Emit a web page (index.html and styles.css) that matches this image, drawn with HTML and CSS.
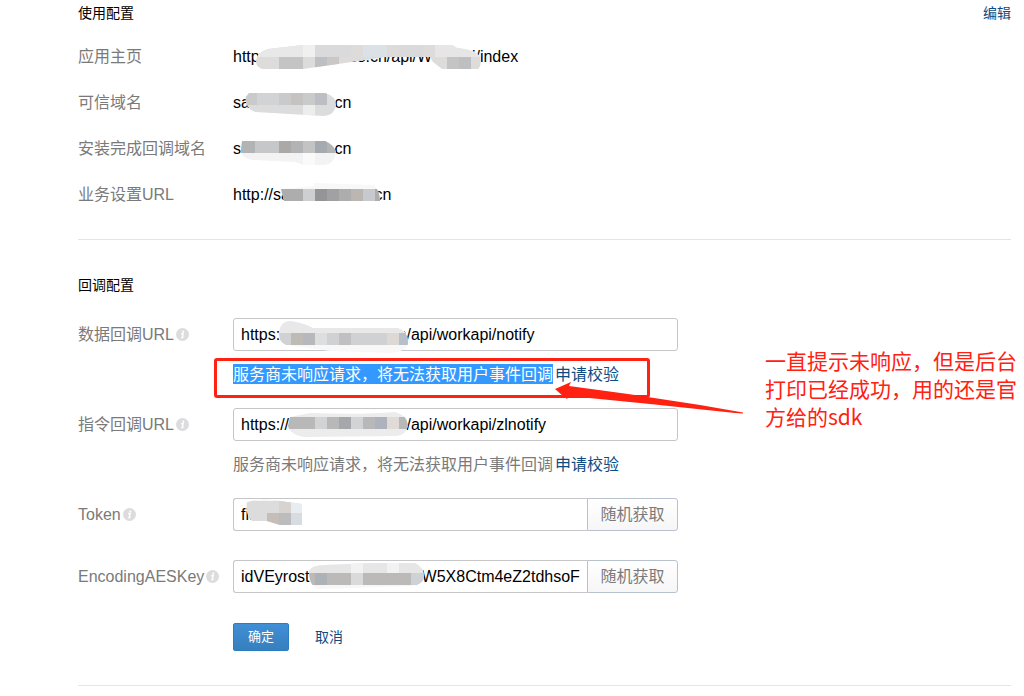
FILE: index.html
```html
<!DOCTYPE html>
<html lang="zh-CN">
<head>
<meta charset="utf-8">
<title>应用配置</title>
<link rel="stylesheet" href="styles.css">
</head>
<body>
<svg class="defs" aria-hidden="true">
  <symbol id="info" viewBox="0 0 13 13"><circle cx="6.5" cy="6.5" r="6.5" fill="#dcdcde"/><circle cx="7.3" cy="3.4" r="1" fill="#fff"/><path d="M5.2 5.8 7.2 5.4 6.1 9.7 7.6 9.2" fill="none" stroke="#fff" stroke-width="1.4"/></symbol>
</svg>
<main class="page">
  <section class="section usage">
    <header class="section-head"><h2>使用配置</h2><a href="#">编辑</a></header>
    <dl class="summary">
      <div class="row"><dt>应用主页</dt><dd>http://saxxxxxxxiss.cn/api/Workapi/index
        <svg class="mask mask-home" viewBox="255 45 228 24" aria-hidden="true"><clipPath id="c1"><path d="M256 61Q257 52 268 49L303 45H452L457 48Q472 49 480 56Q482 66 478 69H442L433 62L430 57H386L345 63L303 69H262Q256 67 256 61Z"/></clipPath><g clip-path="url(#c1)"><path fill="#dddcdb" d="M255 45h228v24H255z"/><path fill="#e8e8e8" d="M255 45h48v12h-48z"/><path fill="#f0f0f0" d="M303 45h12v12h-12z"/><path fill="#dadadc" d="M315 45h36v12h-36zM399 45h24v12h-24z"/><path fill="#dce1e5" d="M363 45h24v12h-24z"/><path fill="#c4c4c4" d="M279 57h24v12h-24zM447 57h12v12h-12z"/><path fill="#bebfc2" d="M315 57h12v12h-12zM459 57h12v12h-12z"/><path fill="#c9c8c7" d="M327 57h12v12h-12z"/><path fill="#e6e6e6" d="M435 45h48v12h-48z"/></g></svg></dd></div>
      <div class="row"><dt>可信域名</dt><dd>saaaaaaaaaa.cn
        <svg class="mask mask-domain" viewBox="245 93 92 24" aria-hidden="true"><clipPath id="c2"><path d="M249 93H325Q336 96 336 105Q335 115 324 116L255 112Q244 107 246 97Z"/></clipPath><g clip-path="url(#c2)"><path fill="#dcdcdc" d="M245 93h92v24h-92z"/><path fill="#cacacb" d="M245 93h12v12h-12zM279 93h12v12h-12zM303 93h12v12h-12z"/><path fill="#d2d3d5" d="M257 93h22v12h-22z"/><path fill="#c4c3c1" d="M291 93h12v12h-12z"/><path fill="#bdbec3" d="M315 93h12v12h-12z"/><path fill="#eceeed" d="M303 105h12v12h-12z"/></g></svg></dd></div>
      <div class="row"><dt>安装完成回调域名</dt><dd>saaaaaaaaaa.cn
        <svg class="mask mask-callback" viewBox="240 141 97 24" aria-hidden="true"><clipPath id="c3"><path d="M242 141H325Q335 145 336 153Q334 164 325 165H304L295 162L253 160Q240 158 241 149Z"/></clipPath><g clip-path="url(#c3)"><path fill="#f3f3f3" d="M240 141h97v24h-97z"/><path fill="#b2b3b5" d="M240 141h97v12h-97z"/><path fill="#c5c7c9" d="M255 141h24v12h-24z"/><path fill="#aaa9a8" d="M279 141h12v12h-12z"/><path fill="#c3c3c4" d="M303 141h12v12h-12z"/><path fill="#a5a9b0" d="M315 141h12v12h-12z"/><path fill="#fafafa" d="M303 153h12v12h-12z"/></g></svg></dd></div>
      <div class="row"><dt>业务设置URL</dt><dd>http://saaaaaaaaaa.cn
        <svg class="mask mask-business" viewBox="280 183 100 24" aria-hidden="true"><clipPath id="c4"><path d="M281 189L314 186V183L374 185Q380 191 380 201H284Z"/></clipPath><g clip-path="url(#c4)"><path fill="#f8f8f8" d="M280 183h100v24H280z"/><path fill="#adadae" d="M280 189h100v12H280z"/><path fill="#cecfd1" d="M303 189h12v12h-12z"/><path fill="#959496" d="M315 189h12v12h-12z"/><path fill="#a1a0a2" d="M327 189h12v12h-12z"/><path fill="#bbb6b1" d="M351 189h12v12h-12z"/><path fill="#c6cace" d="M363 189h12v12h-12z"/></g></svg></dd></div>
    </dl>
  </section>

  <form class="section callback">
    <h2>回调配置</h2>
    <div class="field">
      <label for="data-url">数据回调URL <svg class="info"><use href="#info"/></svg></label>
      <div class="control">
        <div class="group"><input id="data-url" type="text" value="https://ssaaaaaaaaa.cn/api/workapi/notify">
          <svg class="mask mask-data" viewBox="278 320 130 33" aria-hidden="true"><clipPath id="c5"><path d="M279 333Q280 321 291 321Q304 323 313 328H397Q408 330 408 344Q405 352 391 353L330 351L286 345Q279 342 279 333Z"/></clipPath><g clip-path="url(#c5)"><path fill="#f8f8f8" d="M278 320h130v33H278z"/><path fill="#e8e8e8" d="M278 320h130v13H278z"/><path fill="#d0d1d2" d="M278 333h130v12H278z"/><path fill="#bebbb6" d="M291 333h12v12h-12z"/><path fill="#b7b8bd" d="M303 333h12v12h-12z"/><path fill="#dedede" d="M315 333h12v12h-12z"/><path fill="#c0c0c2" d="M339 333h12v12h-12z"/><path fill="#ddd8d3" d="M387 333h12v12h-12z"/><path fill="#b8c0c7" d="M399 333h12v12h-12z"/></g></svg></div>
        <p class="hint"><mark>服务商未响应请求，将无法获取用户事件回调</mark><a href="#">申请校验</a>
          <span class="callout-box"></span>
          <svg class="callout-arrow" viewBox="555 380 190 36" aria-hidden="true"><path fill="#ff2112" d="M555 389 571 382 569 386 628 394 700 405 743 412.500V413.500L735 413 650 404 569 396 567 399 563 396Z"/></svg>
          <span class="callout-note">一直提示未响应，但是后台<br>打印已经成功，用的还是官<br>方给的sdk</span>
        </p>
      </div>
    </div>
    <div class="field">
      <label for="command-url">指令回调URL <svg class="info"><use href="#info"/></svg></label>
      <div class="control">
        <div class="group"><input id="command-url" type="text" value="https://ssaaaaaaaaa.cn/api/workapi/zlnotify">
          <svg class="mask mask-command" viewBox="288 412 120 25" aria-hidden="true"><clipPath id="c6"><path d="M290 417L310 413Q360 415 395 412Q407 415 408 425Q406 436 396 436L305 437Q290 435 288 426Z"/></clipPath><g clip-path="url(#c6)"><path fill="#ececec" d="M288 412h120v25H288z"/><path fill="#b9b8b8" d="M288 417h120v12H288z"/><path fill="#d2d3d5" d="M315 417h12v12h-12zM351 417h12v12h-12z"/><path fill="#a5a7aa" d="M339 417h12v12h-12z"/><path fill="#adb2bd" d="M375 417h12v12h-12z"/><path fill="#e0dbd7" d="M387 417h12v12h-12z"/></g></svg></div>
        <p class="hint"><span>服务商未响应请求，将无法获取用户事件回调</span><a href="#">申请校验</a></p>
      </div>
    </div>
    <div class="field field-short">
      <label for="token">Token <svg class="info"><use href="#info"/></svg></label>
      <div class="control"><div class="group"><input id="token" type="text" value="fiaaaaa"><button type="button">随机获取</button>
        <svg class="mask mask-token" viewBox="245 498 58 28" aria-hidden="true"><clipPath id="c7"><path d="M247 502Q260 498 280 501L302 504V525H280L267 521H252Q245 515 247 502Z"/></clipPath><g clip-path="url(#c7)"><path fill="#dcdcdc" d="M245 498h58v28h-58z"/><path fill="#f6f6f6" d="M245 498h58v3h-58z"/><path fill="#d6d3d1" d="M279 501h12v12h-12z"/><path fill="#e9edf1" d="M291 501h12v12h-12z"/><path fill="#c4bdb8" d="M267 513h12v12h-12z"/><path fill="#bcbcbf" d="M279 513h12v12h-12z"/><path fill="#d7dce0" d="M291 513h12v12h-12z"/></g></svg></div></div>
    </div>
    <div class="field field-short">
      <label for="aes-key">EncodingAESKey <svg class="info"><use href="#info"/></svg></label>
      <div class="control"><div class="group"><input id="aes-key" type="text" value="idVEyrostwaaaaaaaaaw7W5X8Ctm4eZ2tdhsoF"><button type="button">随机获取</button>
        <svg class="mask mask-key" viewBox="308 562 117 28" aria-hidden="true"><clipPath id="c8"><path d="M309 571Q311 565 325 565L370 563H415Q424 567 424 577Q422 585 412 586L318 589Q309 586 309 571Z"/></clipPath><g clip-path="url(#c8)"><path fill="#f7f7f7" d="M308 562h117v28H308z"/><path fill="#e7e6e6" d="M308 562h117v11H308z"/><path fill="#f2f2f2" d="M351 562h12v11h-12zM387 562h12v11h-12z"/><path fill="#bcbab9" d="M308 573h117v12H308z"/><path fill="#adb2b7" d="M315 573h12v12h-12z"/><path fill="#dadada" d="M351 573h12v12h-12z"/><path fill="#ced1d6" d="M411 573h14v12h-14z"/></g></svg></div></div>
    </div>
    <div class="actions"><button class="primary" type="submit">确定</button><a href="#">取消</a></div>
  </form>
</main>
</body>
</html>
```
FILE: styles.css
```css
* { box-sizing: border-box; }
body {
  margin: 0;
  background: #fff;
  color: #000;
  font: 16px/24px "Liberation Sans", "Noto Sans CJK SC", sans-serif;
}
h2, p, dl, dd { margin: 0; }
h2 { font-size: 14px; line-height: 24px; font-weight: 400; }
a { color: #0f4c81; text-decoration: none; }
.defs { position: absolute; width: 0; height: 0; }
.page { padding: 1px 13px 0 78px; }
.section { border-bottom: 1px solid #e4e4e4; }
.usage { padding-bottom: 32px; }
.section-head { display: flex; justify-content: space-between; font-size: 14px; }
.summary { display: flex; flex-direction: column; gap: 22px; padding-top: 20px; }
.row { display: flex; }
.row dt { width: 155px; flex: none; color: #7a7a7a; }
.row dd { position: relative; white-space: nowrap; }

.callback { padding: 33px 0 34px; }
.callback h2 { margin-bottom: 21px; }
.field { display: flex; margin-bottom: 21px; }
.field-short { margin-bottom: 29px; }
.field label {
  display: flex;
  align-items: center;
  gap: 2px;
  flex: none;
  width: 155px;
  height: 33px;
  color: #7a7a7a;
  white-space: nowrap;
}
.info { width: 13px; height: 13px; flex: none; }
.control { flex: 0 1 445px; min-width: 0; }
.group { position: relative; display: flex; }
.group input {
  flex: 1;
  min-width: 0;
  height: 33px;
  padding: 0 7px;
  border: 1px solid #c6c6c8;
  border-radius: 3px;
  background: #fff;
  color: #000;
  font: inherit;
}
.group input:not(:nth-last-child(2)) { padding-right: 6px; border-right: 0; border-radius: 3px 0 0 3px; }
.group button {
  flex: none;
  width: 91px;
  height: 33px;
  padding: 0;
  border: 1px solid #b8c2cc;
  border-radius: 0 3px 3px 0;
  background: linear-gradient(#fff, #f6f6f7);
  color: #7a7a7a;
  font: inherit;
}
.hint { position: relative; display: flex; gap: 2px; margin-top: 12px; color: #7a7a7a; white-space: nowrap; }
.hint mark { height: 20px; margin-top: 1px; line-height: 22px; background: #3399ff; color: #fff; }
.actions { display: flex; align-items: center; gap: 26px; padding: 1px 0 0 155px; font-size: 14px; }
.primary {
  width: 56px;
  height: 28px;
  padding: 0;
  border: 1px solid #2a7dc0;
  border-radius: 2px;
  background: linear-gradient(#418fd6, #377fbd);
  color: #fff;
  font: inherit;
  font-size: 13px;
}

/* Redaction patches and annotations lie over the text */
.mask { position: absolute; pointer-events: none; }
.mask-home { left: 22px; top: 0; width: 228px; height: 24px; }
.mask-domain { left: 12px; top: 2px; width: 92px; height: 24px; }
.mask-callback { left: 7px; top: 4px; width: 97px; height: 24px; }
.mask-business { left: 47px; top: 0; width: 100px; height: 24px; }
.mask-data { left: 45px; top: 2px; width: 130px; height: 33px; }
.mask-command { left: 55px; top: 4px; width: 120px; height: 25px; }
.mask-token { left: 12px; top: 0; width: 58px; height: 28px; }
.mask-key { left: 75px; top: 2px; width: 117px; height: 28px; }
.callout-box {
  position: absolute;
  left: -19px;
  top: -5px;
  width: 436px;
  height: 40px;
  border: 3px solid #ff2112;
  border-radius: 3px;
}
.callout-arrow { position: absolute; left: 322px; top: 17px; width: 190px; height: 36px; }
.callout-note {
  position: absolute;
  left: 532px;
  top: -17px;
  color: #ff2112;
  font: 21px/28px "Noto Sans CJK SC", sans-serif;
}
```
